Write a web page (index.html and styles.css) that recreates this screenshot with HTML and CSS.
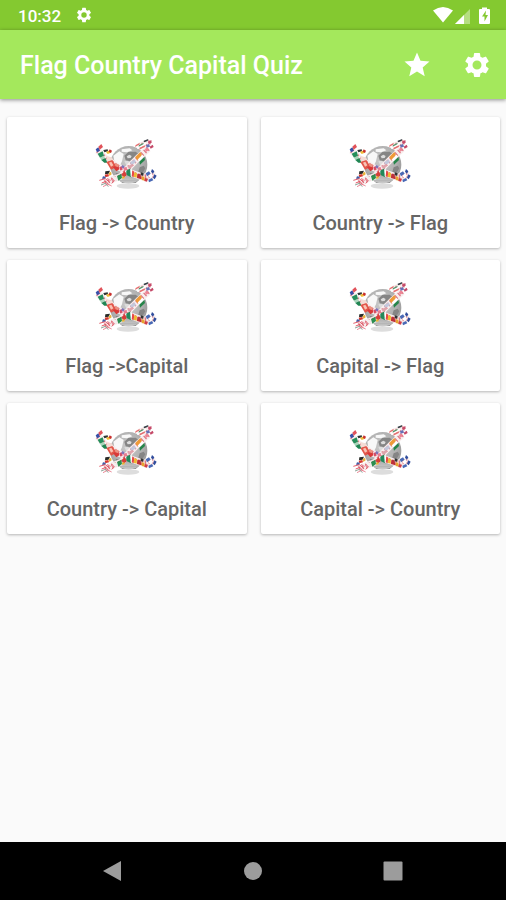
FILE: index.html
```html
<!DOCTYPE html>
<html lang="en">
<head>
<meta charset="utf-8">
<meta name="viewport" content="width=device-width, initial-scale=1">
<title>Flag Country Capital Quiz</title>
<link rel="stylesheet" href="styles.css">
</head>
<body>
<svg class="defs" aria-hidden="true">
  <defs>
    <radialGradient id="ball" cx="0.45" cy="0.4" r="0.62">
      <stop offset="0" stop-color="#c9c9c9"/><stop offset="0.65" stop-color="#b2b2b2"/><stop offset="1" stop-color="#979797"/>
    </radialGradient>
    <linearGradient id="shine" x1="0" y1="0" x2="0" y2="1">
      <stop offset="0" stop-color="#fff" stop-opacity="0"/><stop offset="0.8" stop-color="#fff" stop-opacity="0"/><stop offset="1" stop-color="#fff" stop-opacity="0.6"/>
    </linearGradient>
    <symbol id="gear" viewBox="0 0 24 24"><path d="M19.14 12.94c.04-.3.06-.61.06-.94 0-.32-.02-.64-.07-.94l2.03-1.58a.49.49 0 0 0 .12-.61l-1.92-3.32a.49.49 0 0 0-.59-.22l-2.39.96a7 7 0 0 0-1.62-.94l-.36-2.54a.48.48 0 0 0-.48-.41h-3.84a.47.47 0 0 0-.47.41l-.36 2.54c-.59.24-1.13.57-1.62.94l-2.39-.96a.48.48 0 0 0-.59.22L2.74 8.87a.48.48 0 0 0 .12.61l2.03 1.58c-.05.3-.09.63-.09.94s.02.64.07.94l-2.03 1.58a.49.49 0 0 0-.12.61l1.92 3.32c.12.22.37.29.59.22l2.39-.96c.5.38 1.03.7 1.62.94l.36 2.54c.05.24.24.41.48.41h3.84c.24 0 .44-.17.47-.41l.36-2.54a7 7 0 0 0 1.62-.94l2.39.96c.22.08.47 0 .59-.22l1.92-3.32a.48.48 0 0 0-.12-.61zM12 15.6A3.6 3.6 0 1 1 12 8.4a3.6 3.6 0 0 1 0 7.2z"/></symbol>
    <symbol id="globe" viewBox="0 0 225 210">
      <ellipse cx="117" cy="168" rx="34" ry="8" fill="#ddd"/>
      <circle cx="119" cy="104" r="56" fill="url(#ball)"/>
      <path fill="#f8f8f8" d="M73 77l18-13 13 8-5 22-7 14-16-14zM98 58l24-3 8 6-16 6-16-2z"/>
      <path fill="#858585" d="M106 77l12-11 22-1 14 11 2 12-16 9-8-8-12 5-10-3zM152 112l12-5 5 8-9 15-12-5zM80 128l14 4-2 10-10-4z"/>
      <path fill="#ddd" d="M113 79l8-5 7 4-3 6-9 1zM106 94l12-2 4 8-10 6z"/>
      <path fill="#8b8b8b" d="M90 150h60l-10 9h-40z"/>
      <circle cx="119" cy="104" r="56" fill="url(#shine)"/>
      <g fill="none" stroke-linejoin="round">
        <path stroke="#f8eeee" stroke-width="20" d="M26 62l24 24 34 23 40 19 36 13 40-6M183 36l-34 13M178 56l-27 24-26 26-27 32-52 20"/>
        <path stroke="#dc7782" stroke-width="13" stroke-dasharray="4 7" d="M26 62l24 24 34 23 40 19 36 13 40-6M183 36l-34 13M178 56l-27 24-26 26-27 32-52 20"/>
      </g>
      <g>
        <path fill="#3850a8" d="M20 58l8-6 5 10-9 5z"/>
        <path fill="#e1525a" d="M28 50l9-8 5 9-10 8z"/>
        <path fill="#258f5b" d="M26 71l15-7 4 13-12 6z"/>
        <path fill="#a7d6bb" d="M33 83l12-6 3 7-11 6z"/>
        <path fill="#208653" d="M37 90l12-6 7 14-10 0z"/>
        <path fill="#303434" d="M43 60l13-2 1 6-11 3z"/>
        <path fill="#f0bd38" d="M51 66l11-5 4 7-10 4z"/>
        <path fill="#c92f30" d="M62 58l7 4-3 7-7-4z"/>
        <path fill="#f4dcd5" d="M52 78l16 4 6 9-20 5z"/>
        <path fill="#e25649" d="M52 96l18-6 13 20-17 9z"/>
        <path fill="#f9c3b4" d="M60 98l7-3 6 11-7 4z"/>
        <path fill="#d83938" d="M72 112l15-9 4 15-9 6z"/>
        <path fill="#ec9382" d="M78 100l11 3-1 9-9-3z"/>
        <path fill="#d84e66" d="M91 111l7-2 3 10-8 1z"/>
        <path fill="#7c75b7" d="M99 105l8 3-3 8-7-4z"/>
        <path fill="#e87b91" d="M106 112l9 0-5 9-7-3z"/>
        <path fill="#23885a" d="M112 122l12-7 3 27-15-7z"/>
        <path fill="#fff" d="M124 117l6 3-1 21-4-2z"/>
        <path fill="#e84848" d="M130 121l6 4-2 17-6-3z"/>
        <path fill="#eebb32" d="M136 127l8 2-1 14-9-3z"/>
        <path fill="#be3038" d="M145 131l10 2 2 15-13-4z"/>
        <path fill="#333" d="M155 127l9 3-1 7-8-1z"/>
        <path fill="#e7a32f" d="M158 139l8 1 2 12-10-2z"/>
        <path fill="#cf3b48" d="M168 144l9 2-3 9-8-2z"/>
        <path fill="#4969b5" d="M170 130l10-6 5 7-11 8zM178 149l11-5 4 7-13 6z"/>
        <path fill="#fff" d="M178 137l10-7 5 8-10 6z"/>
        <path fill="#304d9d" d="M189 117l7 7-4 7-6-6zM196 133l7 4-6 11-5-5z"/>
        <path fill="#fff" d="M142 49l30-14 2 7-29 15z"/>
        <path fill="#e47070" d="M140 45l13-7-3 6-12 7zM152 53l18-8-3 6-16 8z"/>
        <path fill="#55926b" d="M150 45l14-7-1 5-14 7z"/>
        <path fill="#333e45" d="M164 32l14-5-2 6-11 4z"/>
        <path fill="#c54a69" d="M177 35l10-5 1 8-9 4zM182 50l9-6 3 7-9 5z"/>
        <path fill="#6670b5" d="M171 45l9-3 3 8-10 3z"/>
        <path fill="#ee8293" d="M168 56l9-3 2 8-9 5z"/>
        <path fill="#ef9b38" d="M139 81l15-15 5 9-14 16z"/>
        <path fill="#fff" d="M146 89l14-15 5 7-14 14z"/>
        <path fill="#26854a" d="M151 95l15-14 2 9-15 14z"/>
        <path fill="#c3c8dc" d="M123 97l14-9 4 9-14 9z"/>
        <path fill="#dfa4ac" d="M116 109l14-8 2 8-12 9z"/>
        <path fill="#d63d39" d="M98 132l9-9 6 13-9 8z"/>
        <path fill="#2b8e50" d="M84 138l13-7 2 13-11 8z"/>
        <path fill="#e1b032" d="M99 141l7-4 1 8-7 2z"/>
        <path fill="#f4eeee" d="M67 137l15 3 4 12-16-1z"/>
        <path fill="#282b28" d="M49 124l14-2-4 9-11 2z"/>
        <path fill="#d5382f" d="M47 134l11-2 2 7-11 3z"/>
        <path fill="#eab238" d="M59 129l7-4 2 8-7 5z"/>
        <path fill="#435ca4" d="M42 139l9 1-3 7-9-1z"/>
      </g>
      <g fill="none" stroke-width="3">
        <path stroke="#e25b69" d="M31 151l18-5 12 10M38 159l13-5 9 12M68 144l8 9-8 7"/>
        <path stroke="#eb8b99" d="M42 170l15-8 11 6M54 145l10 6 8-5"/>
        <path stroke="#8ea79b" d="M36 165l13-5 9 10"/>
      </g>
    </symbol>
  </defs>
</svg>
<div class="screen">
  <div class="status">
    <span class="clock">10:32</span>
    <svg class="status-gear" aria-hidden="true"><use href="#gear"/></svg>
    <svg class="signals" viewBox="0 0 60 20" aria-hidden="true">
      <path d="M1 5.5Q11 -1.5 21 5.5L11 17.5z"/>
      <path opacity=".4" d="M38 4v15h-15z"/><path d="M32 10v9h-9z"/>
      <path d="M50 4V2.5h5V4h2q1 0 1 1v13q0 1-1 1h-9q-1 0-1-1V5q0-1 1-1z"/>
      <path class="bolt" d="M54 5.5l-4 6h2.500v5l3.500-6.500h-2.500z"/>
    </svg>
  </div>
  <header class="toolbar">
    <h1>Flag Country Capital Quiz</h1>
    <button class="action" aria-label="Favorites"><svg viewBox="0 0 24 24"><path d="M12 17.27L18.18 21l-1.64-7.03L22 9.24l-7.19-.61L12 2 9.19 8.63 2 9.24l5.46 4.73L5.82 21z"/></svg></button>
    <button class="action" aria-label="Settings"><svg><use href="#gear"/></svg></button>
  </header>
  <main class="grid">
    <button class="card"><svg aria-hidden="true"><use href="#globe"/></svg><span>Flag -&gt; Country</span></button>
    <button class="card"><svg aria-hidden="true"><use href="#globe"/></svg><span>Country -&gt; Flag</span></button>
    <button class="card"><svg aria-hidden="true"><use href="#globe"/></svg><span>Flag -&gt;Capital</span></button>
    <button class="card"><svg aria-hidden="true"><use href="#globe"/></svg><span>Capital -&gt; Flag</span></button>
    <button class="card"><svg aria-hidden="true"><use href="#globe"/></svg><span>Country -&gt; Capital</span></button>
    <button class="card"><svg aria-hidden="true"><use href="#globe"/></svg><span>Capital -&gt; Country</span></button>
  </main>
  <nav class="navbar">
    <button aria-label="Back"><svg viewBox="0 0 20 22"><path d="M18 1v20L0 11z"/></svg></button>
    <button aria-label="Home"><svg viewBox="0 0 20 22"><circle cx="10" cy="11" r="9"/></svg></button>
    <button aria-label="Recent apps"><svg viewBox="0 0 20 22"><rect x=".5" y="1.5" width="19" height="19" rx="1"/></svg></button>
  </nav>
</div>
</body>
</html>
```
FILE: styles.css
```css
* {
  box-sizing: border-box;
}

body {
  margin: 0;
  background: #fafafa;
  font-family: Roboto, "Liberation Sans", sans-serif;
}

button {
  display: flex;
  padding: 0;
  border: 0;
  background: none;
  font: inherit;
  cursor: pointer;
}

.defs {
  position: absolute;
  width: 0;
  height: 0;
}

.screen {
  display: flex;
  flex-direction: column;
  min-height: 100vh;
}

.status {
  display: flex;
  align-items: center;
  height: 30px;
  padding: 0 14px 0 18px;
  background: #84c930;
  color: #fff;
  fill: #fff;
}

.clock {
  padding-top: 2px;
  font-size: 17px;
  font-weight: 500;
  line-height: 30px;
}

.status-gear {
  width: 18px;
  height: 18px;
  margin-left: 14px;
}

.signals {
  width: 60px;
  height: 20px;
  margin-left: auto;
}

.bolt {
  fill: #84c930;
}

.toolbar {
  display: flex;
  align-items: center;
  gap: 30px;
  height: 69px;
  padding: 0 14px 0 20px;
  background: #a4e85c;
  box-shadow: 0 1px 4px rgba(0, 0, 0, 0.45);
}

.toolbar h1 {
  flex: 1;
  margin: 0;
  padding-top: 2px;
  color: #fff;
  font-size: 25px;
  font-weight: 500;
  line-height: 32px;
  white-space: nowrap;
}

.action svg {
  width: 30px;
  height: 30px;
  fill: #fff;
}

.grid {
  display: grid;
  flex: 1;
  grid-template-columns: 1fr 1fr;
  align-content: start;
  gap: 12px 14px;
  padding: 18px 6px 18px 7px;
}

.card {
  flex-direction: column;
  align-items: center;
  height: 131px;
  padding-top: 13px;
  border-radius: 2px;
  background: #fff;
  box-shadow: 0 1px 3px rgba(0, 0, 0, 0.28);
  color: #666;
  font-size: 20px;
  font-weight: 500;
  line-height: 24px;
}

.card svg {
  width: 75px;
  height: 70px;
  margin-bottom: 11px;
}

.navbar {
  display: flex;
  justify-content: center;
  align-items: center;
  gap: 120px;
  height: 58px;
  background: #000;
}

.navbar svg {
  width: 20px;
  height: 22px;
  fill: #9c9c9c;
}
```
